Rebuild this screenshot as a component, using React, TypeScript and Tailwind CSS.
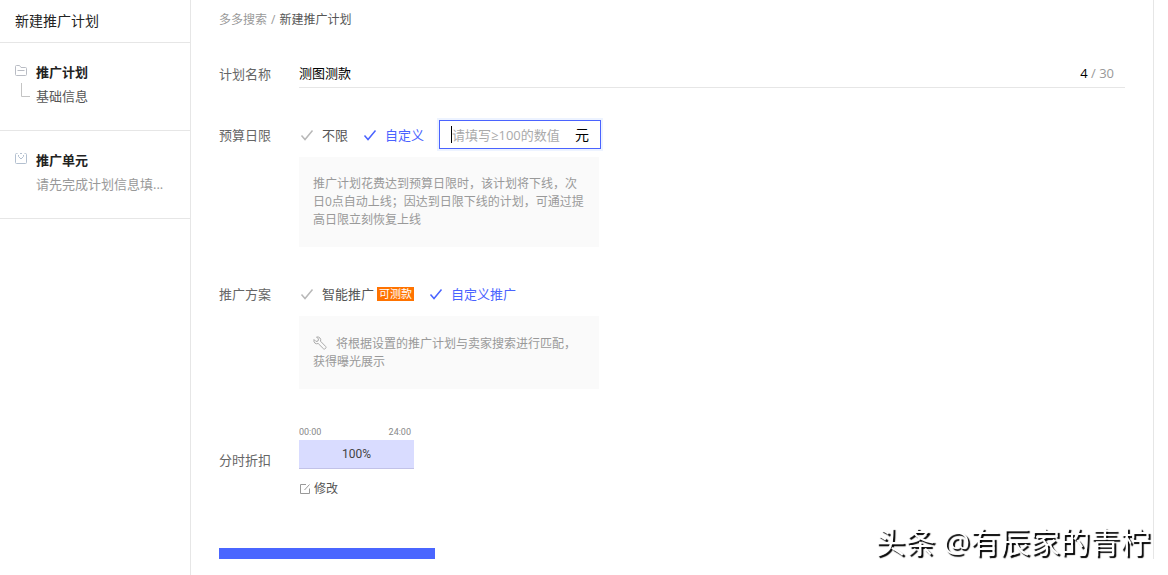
import { useState } from 'react';
import type { ReactNode } from 'react';

interface CheckOptionProps {
  name: string;
  checked: boolean;
  onSelect: () => void;
  children: ReactNode;
}

const steps = [
  { title: '推广计划', note: '基础信息', active: true },
  { title: '推广单元', note: '请先完成计划信息填...', active: false },
];

function FolderIcon() {
  return (
    <svg width="12" height="12" viewBox="0 0 12 12" fill="none" stroke="#b9bcc4">
      <path d="M.5 9.5V1.5Q.5.5 1.5.5H4.5L6 2.5H10.5Q11.5 2.5 11.5 3.5V9.5Q11.5 10.5 10.5 10.5H1.5Q.5 10.5.5 9.5ZM2.5 5.5H9.5" />
    </svg>
  );
}

function UnitIcon() {
  return (
    <svg width="12" height="12" viewBox="0 0 12 12" fill="none" stroke="#b3c0d0">
      <path d="M2.5 .5H1.5Q.5.5.5 1.5V9.5Q.5 10.5 1.5 10.5H10.5Q11.5 10.5 11.5 9.5V1.5Q11.5.5 10.5.5H9.5M5 .5H7M3.5 2V3.5L6 6L8.5 3.5V2" />
    </svg>
  );
}

function CheckOption({ name, checked, onSelect, children }: CheckOptionProps) {
  return (
    <label
      className={`relative flex cursor-pointer items-center gap-2 ${
        checked ? 'text-[#4a63ff]' : 'text-[#555]'
      }`}
    >
      <input type="radio" name={name} checked={checked} onChange={onSelect} className="sr-only" />
      <svg
        width="14"
        height="12"
        viewBox="0 0 14 12"
        fill="none"
        strokeWidth="1.5"
        className={checked ? 'stroke-[#4a63ff]' : 'stroke-[#b8b8b8]'}
      >
        <path d="M1.5 6.5L5 10.5L12.5 1.5" />
      </svg>
      <span className="flex items-center gap-[3px]">{children}</span>
    </label>
  );
}

export default function App() {
  const [planName, setPlanName] = useState('测图测款');
  const [budget, setBudget] = useState('');
  const [limit, setLimit] = useState('custom');
  const [scheme, setScheme] = useState('custom');

  return (
    <div className="flex min-h-screen items-stretch bg-white font-['Open_Sans','Noto_Sans_CJK_SC',sans-serif] text-[13px] leading-5 text-[#666]">
      <aside className="w-[191px] shrink-0 border-r border-[#e6e6e6]">
        <h1 className="border-b border-[#e6e6e6] px-[15px] py-[11px] text-sm text-[#222]">
          新建推广计划
        </h1>
        {steps.map((step) => (
          <section
            key={step.title}
            className="flex gap-[9px] border-b border-[#e6e6e6] pt-[19px] pb-6 pl-[15px]"
          >
            <div className="flex w-3 flex-col pt-[3px]">
              {step.active ? <FolderIcon /> : <UnitIcon />}
              {step.active && (
                <svg width="9" height="14" viewBox="0 0 9 14" fill="none" stroke="#c4c4c4" className="mt-[6px] ml-[6px]">
                  <path d="M.5 0V13.5H9" />
                </svg>
              )}
            </div>
            <div className="flex flex-col gap-1">
              <h2 className="font-bold text-[#222]">{step.title}</h2>
              <p className={step.active ? 'text-[#555]' : 'text-[#999]'}>{step.note}</p>
            </div>
          </section>
        ))}
      </aside>

      <main className="mr-[14px] flex-1 self-start border-r border-[#e6e6e6] px-7">
        <nav className="flex h-10 items-center gap-1 text-xs text-[#999]">
          <a href="#search">多多搜索</a>
          <span>/</span>
          <span className="text-[#555]">新建推广计划</span>
        </nav>

        <div className="mt-[18px] flex">
          <label htmlFor="plan-name" className="w-20 pt-[6px]">
            计划名称
          </label>
          <div className="flex h-[30px] flex-1 items-center border-b border-[#e6e6e6] pr-[11px]">
            <input
              id="plan-name"
              value={planName}
              maxLength={30}
              onChange={(e) => setPlanName(e.target.value)}
              className="flex-1 text-black outline-none"
            />
            <span className="text-[#999]">
              <span className="font-medium text-black">{planName.length}</span> / 30
            </span>
          </div>
        </div>

        <div className="mt-8 flex">
          <div className="w-20 pt-[5px]">预算日限</div>
          <div>
            <div className="flex h-[29px] items-center gap-[15px] pl-px">
              <CheckOption name="limit" checked={limit === 'none'} onSelect={() => setLimit('none')}>
                不限
              </CheckOption>
              <CheckOption name="limit" checked={limit === 'custom'} onSelect={() => setLimit('custom')}>
                自定义
              </CheckOption>
              <label className="flex h-[29px] w-[162px] items-center border border-[#4a63ff] px-[11px] text-black shadow-[0_0_0_2px_#edf3ff]">
                <span className="h-[17px] w-px bg-black" />
                <input
                  value={budget}
                  onChange={(e) => setBudget(e.target.value)}
                  placeholder="请填写≥100的数值"
                  className="w-full min-w-0 flex-1 outline-none placeholder:text-[#aaa]"
                />
                <span className="text-sm">元</span>
              </label>
            </div>
            <p className="mt-2 w-[300px] bg-[#fafafa] px-[14px] py-[18px] text-xs leading-[18px] text-[#999]">
              推广计划花费达到预算日限时，该计划将下线，次日0点自动上线；因达到日限下线的计划，可通过提高日限立刻恢复上线
            </p>
          </div>
        </div>

        <div className="mt-8 flex">
          <div className="w-20 pt-[5px]">推广方案</div>
          <div>
            <div className="flex h-[29px] items-center gap-[15px] pl-px">
              <CheckOption name="scheme" checked={scheme === 'smart'} onSelect={() => setScheme('smart')}>
                智能推广
                <span className="bg-[#ff7300] px-[2px] text-[11px] leading-[14px] text-white">可测款</span>
              </CheckOption>
              <CheckOption name="scheme" checked={scheme === 'custom'} onSelect={() => setScheme('custom')}>
                自定义推广
              </CheckOption>
            </div>
            <p className="mt-2 w-[300px] bg-[#fafafa] px-[14px] pt-[19px] pb-[18px] text-xs leading-[18px] text-[#999]">
              <svg width="14" height="14" viewBox="0 0 14 14" fill="none" stroke="#aaa" className="mr-[9px] inline-block align-[-2px]">
                <path d="M3.5 1L5.5 3L5 5L3 5.5L1 3.5Q.5 6 2 7.2Q3.5 8.2 5.2 7.5L10.5 12.8Q11.5 13.5 12.5 12.5Q13.5 11.5 12.7 10.5L7.5 5.2Q8.2 3.5 7 2Q5.5.5 3.5 1Z" />
              </svg>
              将根据设置的推广计划与卖家搜索进行匹配，获得曝光展示
            </p>
          </div>
        </div>

        <div className="mt-[35px] flex items-center">
          <div className="w-20 pb-1">分时折扣</div>
          <div className="w-[115px]">
            <div className="flex h-4 items-center justify-between pr-[3px] font-['Roboto',sans-serif] text-[9px] text-[#888]">
              <span>00:00</span>
              <span>24:00</span>
            </div>
            <div className="h-[29px] border-b border-[#c2c2e8] bg-[#d9dcff] text-center font-['Roboto',sans-serif] text-xs leading-7 text-[#444]">
              100%
            </div>
            <button type="button" className="mt-[10px] flex items-center gap-1 pl-[1px] text-xs leading-5 text-[#555]">
              <svg width="10" height="10" viewBox="0 0 10 10" fill="none" stroke="#999">
                <path d="M6 .5H.5V9.5H9.5V4.5M4.5 6L9.5.5" />
              </svg>
              修改
            </button>
          </div>
        </div>

        <button type="button" aria-label="下一步" className="mt-[49px] block h-[11px] w-[216px] bg-[#4a66ff]" />
      </main>

      <div className="pointer-events-none fixed right-[18px] bottom-3 text-[30px] leading-[42px] text-white [text-shadow:2px_2px_1px_#000]">
        头条 @有辰家的青柠
      </div>
    </div>
  );
}
